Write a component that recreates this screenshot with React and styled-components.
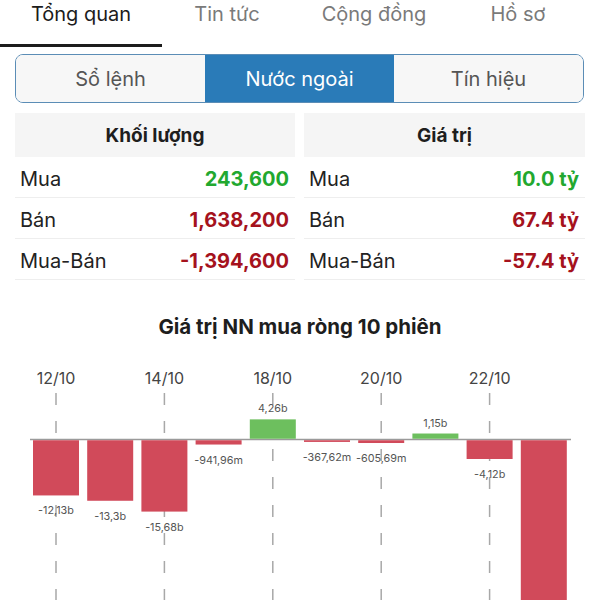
import React from 'react'
import styled, { createGlobalStyle } from 'styled-components'

const GlobalStyle = createGlobalStyle`
  html, body {
    margin: 0;
    padding: 0;
    background: #fff;
    overflow: hidden;
    font-family: Inter, "Liberation Sans", Arial, sans-serif;
  }
`

const Page = styled.div`
  width: 600px;
  height: 600px;
  overflow: hidden;
`

const TabBar = styled.nav`
  display: flex;
  height: 47px;
`

const Tab = styled.div`
  flex-shrink: 0;
  width: ${p => p.w}px;
  box-sizing: border-box;
  text-align: center;
  font-size: 20px;
  line-height: 28px;
  color: ${p => (p.active ? '#1c1c1c' : '#7a7a7a')};
  border-bottom: 3px solid ${p => (p.active ? '#1c1c1c' : 'transparent')};
`

const Body = styled.div`
  padding: 7px 15px 0 15px;
`

const Segmented = styled.div`
  display: flex;
  height: 49px;
  box-sizing: border-box;
  border: 1.5px solid #5b8db6;
  border-radius: 8px;
  overflow: hidden;
  margin-right: 1px;
`

const Segment = styled.div`
  flex: 1;
  display: flex;
  align-items: center;
  justify-content: center;
  font-size: 20px;
  color: ${p => (p.active ? '#fff' : '#555')};
  background: ${p => (p.active ? '#2a7bb8' : '#f7f7f7')};
`

const Tables = styled.div`
  display: grid;
  grid-template-columns: 280px 281px;
  column-gap: 9px;
  margin-top: 10px;
`

const Table = styled.div`
  display: flex;
  flex-direction: column;
`

const Head = styled.div`
  height: 44px;
  display: flex;
  align-items: center;
  justify-content: center;
  background: #f5f5f5;
  font-size: 19px;
  font-weight: 700;
  color: #1e1e1e;
`

const Row = styled.div`
  height: 36px;
  padding: 4px 6px 0 5px;
  display: flex;
  align-items: center;
  justify-content: space-between;
  border-bottom: 1px solid #eeeeee;
`

const Label = styled.span`
  font-size: 20px;
  color: #222;
`

const Value = styled.span`
  font-size: 20px;
  font-weight: 700;
  color: ${p => (p.up ? '#22a82f' : '#a5121d')};
`

const ChartTitle = styled.div`
  margin-top: 35px;
  text-align: center;
  font-size: 20.5px;
  line-height: 24px;
  font-weight: 700;
  color: #1e1e1e;
`

const ChartSvg = styled.svg`
  display: block;
  font-family: Inter, "Liberation Sans", Arial, sans-serif;
`

const volume = [
  ['Mua', '243,600', true],
  ['Bán', '1,638,200', false],
  ['Mua-Bán', '-1,394,600', false],
]

const amount = [
  ['Mua', '10.0 tỷ', true],
  ['Bán', '67.4 tỷ', false],
  ['Mua-Bán', '-57.4 tỷ', false],
]

// last bar runs past the bottom of the screen, its label is not visible
const bars = [
  [-12.13, '-12,13b'],
  [-13.3, '-13,3b'],
  [-15.68, '-15,68b'],
  [-0.94196, '-941,96m'],
  [4.26, '4,26b'],
  [-0.36762, '-367,62m'],
  [-0.60569, '-605,69m'],
  [1.15, '1,15b'],
  [-4.12, '-4,12b'],
  [-45, null],
]

const dates = { 0: '12/10', 2: '14/10', 4: '18/10', 6: '20/10', 8: '22/10' }

function Chart () {
  const zero = 100.5
  const scale = 4.55
  const step = 54.2
  const x0 = 56
  const bw = 46
  return (
    <ChartSvg width='600' height='320' viewBox='0 0 600 320'>
      {Object.keys(dates).map(k => {
        const cx = x0 + step * k
        return (
          <g key={'d' + k}>
            <text x={cx} y={45} textAnchor='middle' fontSize='16' fill='#444'>{dates[k]}</text>
            <line x1={cx} y1={54} x2={cx} y2={320} stroke='#a8a8a8' strokeWidth='1.5' strokeDasharray='12 16' />
          </g>
        )
      })}
      <line x1='30' y1={zero} x2='571' y2={zero} stroke='#9a9a9a' strokeWidth='1.5' />
      {bars.map(([v, lbl], i) => {
        const cx = x0 + step * i
        const h = Math.max(Math.abs(v) * scale, 1.5)
        const up = v > 0
        const y = up ? zero - 0.75 - h : zero + 0.75
        const ly = up ? y - 7 : y + h + 19
        return (
          <g key={i}>
            <rect x={cx - bw / 2} y={y} width={bw} height={h} fill={up ? '#6dbf5e' : '#d14a5a'} />
            {lbl && <text x={cx} y={ly} textAnchor='middle' fontSize='10.8' fill='#555'>{lbl}</text>}
          </g>
        )
      })}
    </ChartSvg>
  )
}

export default function App () {
  const tabs = [['Tổng quan', 162], ['Tin tức', 130], ['Cộng đồng', 164], ['Hồ sơ', 124]]
  return (
    <Page>
      <GlobalStyle />
      <TabBar>
        {tabs.map(([t, w], i) => <Tab key={t} w={w} active={i === 0}>{t}</Tab>)}
      </TabBar>
      <Body>
        <Segmented>
          <Segment>Sổ lệnh</Segment>
          <Segment active>Nước ngoài</Segment>
          <Segment>Tín hiệu</Segment>
        </Segmented>
        <Tables>
          <Table>
            <Head>Khối lượng</Head>
            {volume.map(([l, v, up]) => (
              <Row key={l}><Label>{l}</Label><Value up={up}>{v}</Value></Row>
            ))}
          </Table>
          <Table>
            <Head>Giá trị</Head>
            {amount.map(([l, v, up]) => (
              <Row key={l}><Label>{l}</Label><Value up={up}>{v}</Value></Row>
            ))}
          </Table>
        </Tables>
      </Body>
      <ChartTitle>Giá trị NN mua ròng 10 phiên</ChartTitle>
      <Chart />
    </Page>
  )
}
